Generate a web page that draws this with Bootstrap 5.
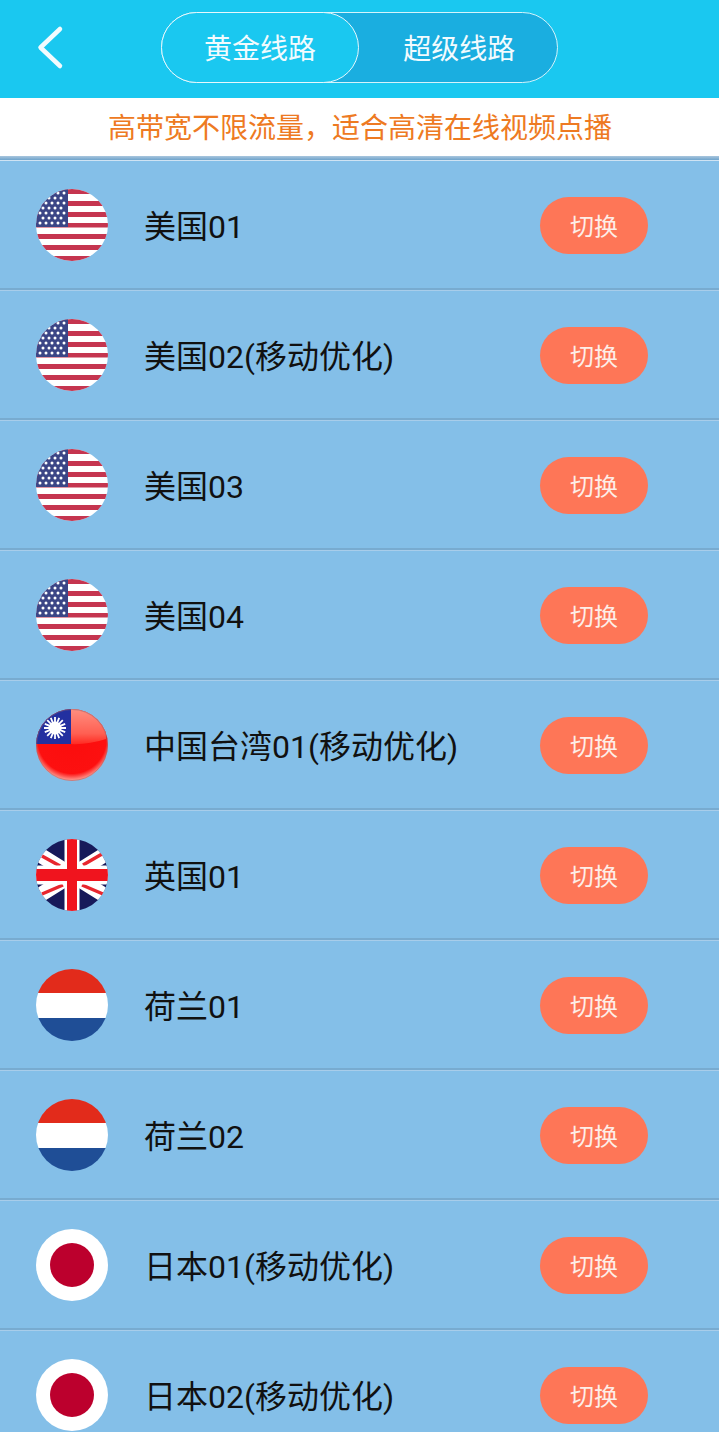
<!DOCTYPE html>
<html lang="zh">
<head>
    <meta charset="UTF-8">
    <title>线路</title>
    <link href="https://cdn.jsdelivr.net/npm/bootstrap@5.3.3/dist/css/bootstrap.min.css" rel="stylesheet">
    <script src="https://cdn.jsdelivr.net/npm/bootstrap@5.3.3/dist/js/bootstrap.bundle.min.js"></script>
    <style>
        body { width: 719px; height: 1432px; overflow: hidden; background: #84bfe8; font-family: Roboto, "Noto Sans CJK SC", sans-serif; }
        .top-bar { height: 98px; background: #1ac8f0; padding-left: 36px; padding-bottom: 3px; }
        .back-btn { width: 30px; height: 46px; margin-bottom: 1px; }
        .line-switch { width: 397px; height: 71px; margin-left: 95px; background: #1aaee0; border: 1px solid #d5f3fb; border-radius: 36px; }
        .line-tab { height: 100%; width: 50%; font-size: 28px; color: #f2fbfe; line-height: 1; padding: 5px 0 0 3px; }
        .line-tab.on { background: #1ac8f0; border: 1px solid #e6f8fd; border-radius: 36px; margin: -1px 0 -1px -1px; height: 71px; width: 198px; padding-left: 0; }
        .note-bar { height: 58px; background: #fff; color: #ee7a22; font-size: 28px; line-height: 1; padding: 4px 0 0 1px; }
        .bar-edge { height: 5px; background: linear-gradient(#a9c6de, #6fa4cc); border-bottom: 1px solid #cfe3f3; }
        .line-row { height: 130px; background: #84bfe8; border-bottom: 1px solid #a8cdea; box-shadow: inset 0 -2px 0 #78abd0; padding: 0 71px 1px 36px; }
        .flag-pic { width: 72px; height: 72px; flex: none; display: block; filter: blur(.4px); }
        .line-name { font-size: 32px; color: #111; margin-left: 36px; line-height: 1; flex-grow: 1; padding-top: 4px; }
        .switch-btn { width: 108px; height: 57px; background: #fe7657; color: #fdeee8; border-radius: 29px; font-size: 24px; border: 0; padding: 3px 0 0; line-height: 1; }
        .switch-btn:hover { background: #fe7657; color: #fdeee8; }
    </style>
</head>
<body>
    <svg width="0" height="0" class="position-absolute">
        <defs>
            <clipPath id="roundClip"><circle cx="36" cy="36" r="36"/></clipPath>
            <radialGradient id="twRed" cx="50%" cy="42%" r="56%">
                <stop offset="0" stop-color="#fb0d0d"/><stop offset="0.85" stop-color="#fd1010"/><stop offset="1" stop-color="#ff8d84"/>
            </radialGradient>
            <linearGradient id="twGloss" x1="0" y1="0" x2="0" y2="1">
                <stop offset="0" stop-color="#ff8f80"/><stop offset=".7" stop-color="#ff5f52"/><stop offset="1" stop-color="#ff2a22"/>
            </linearGradient>
            <symbol id="flagUs" viewBox="0 0 72 72">
                <g clip-path="url(#roundClip)">
                    <rect width="72" height="72" fill="#fff"/>
                    <path fill="#c5354f" d="M0 0h72v5H0zM0 12h72v5H0zM0 23h72v5H0zM0 34h72v4.500H0zM0 45h72v5H0zM0 56h72v5H0zM0 67h72v5H0z"/>
                    <rect width="32" height="38" fill="#3b4586"/>
                    <g fill="#fff">
                        <circle cx="28" cy="4" r="1.500"/><circle cx="22" cy="4" r="1.500"/><circle cx="16" cy="4" r="1.500"/>
                        <circle cx="25" cy="9" r="1.500"/><circle cx="19" cy="9" r="1.500"/><circle cx="13" cy="9" r="1.500"/>
                        <circle cx="28" cy="14" r="1.500"/><circle cx="22" cy="14" r="1.500"/><circle cx="16" cy="14" r="1.500"/><circle cx="10" cy="14" r="1.500"/>
                        <circle cx="25" cy="19" r="1.500"/><circle cx="19" cy="19" r="1.500"/><circle cx="13" cy="19" r="1.500"/><circle cx="7" cy="19" r="1.500"/>
                        <circle cx="28" cy="24" r="1.500"/><circle cx="22" cy="24" r="1.500"/><circle cx="16" cy="24" r="1.500"/><circle cx="10" cy="24" r="1.500"/><circle cx="4" cy="24" r="1.500"/>
                        <circle cx="25" cy="29" r="1.500"/><circle cx="19" cy="29" r="1.500"/><circle cx="13" cy="29" r="1.500"/><circle cx="7" cy="29" r="1.500"/>
                        <circle cx="28" cy="34" r="1.500"/><circle cx="22" cy="34" r="1.500"/><circle cx="16" cy="34" r="1.500"/><circle cx="10" cy="34" r="1.500"/><circle cx="4" cy="34" r="1.500"/>
                    </g>
                </g>
            </symbol>
            <symbol id="flagTw" viewBox="0 0 72 72">
                <g clip-path="url(#roundClip)">
                    <rect width="72" height="72" fill="url(#twRed)"/>
                    <path fill="url(#twGloss)" d="M34 0h30v6q7 10 6 24-18 6-36 5z"/>
                    <rect width="35" height="35" fill="#2330a0"/>
                    <g stroke="#fff" stroke-width="1.800" transform="translate(19 19)">
                        <path d="M0-11V11M-11 0H11M-7.800-7.800L7.800 7.800M-7.800 7.800L7.800-7.800M-4.200-10.200L4.200 10.200M4.200-10.200L-4.200 10.200M-10.200-4.200L10.200 4.200M-10.200 4.200L10.200-4.200"/>
                    </g>
                    <circle cx="19" cy="19" r="6.500" fill="#fff"/>
                </g>
                <circle cx="36" cy="36" r="35.500" fill="none" stroke="#8a6a70" stroke-opacity=".45"/>
            </symbol>
            <symbol id="flagUk" viewBox="0 0 72 72">
                <g clip-path="url(#roundClip)">
                    <rect width="72" height="72" fill="#17195a"/>
                    <path stroke="#fff" stroke-width="15" d="M-4 11L76 61M76 11L-4 61"/>
                    <path stroke="#e8262e" stroke-width="3.500" d="M6 17L24 27M66 15L47 26M6 55L27 46M67 55L46 46"/>
                    <path fill="#fff" d="M28.500 0h15v26.500H72v19H43.500V72h-15V45.500H0v-19h28.500z"/>
                    <path fill="#f0141e" d="M31 0h10v30h31v12H41v30H31V42H0V30h31z"/>
                </g>
            </symbol>
            <symbol id="flagNl" viewBox="0 0 72 72">
                <g clip-path="url(#roundClip)">
                    <rect width="72" height="24" fill="#e22b1b"/>
                    <rect y="24" width="72" height="25" fill="#fff"/>
                    <rect y="49" width="72" height="23" fill="#1f4e96"/>
                </g>
            </symbol>
            <symbol id="flagJp" viewBox="0 0 72 72">
                <circle cx="36" cy="36" r="36" fill="#fff"/>
                <circle cx="36" cy="36" r="22" fill="#bc002d"/>
            </symbol>
        </defs>
    </svg>

    <div class="top-bar d-flex align-items-center">
        <svg class="back-btn" viewBox="0 0 30 46"><path d="M24 5L4.500 23.500 24 42" fill="none" stroke="#f2fbfe" stroke-width="4.500" stroke-linecap="round" stroke-linejoin="round"/></svg>
        <div class="line-switch d-flex">
            <div class="line-tab on d-flex align-items-center justify-content-center">黄金线路</div>
            <div class="line-tab d-flex align-items-center justify-content-center">超级线路</div>
        </div>
    </div>
    <div class="note-bar d-flex align-items-center justify-content-center">高带宽不限流量，适合高清在线视频点播</div>
    <div class="bar-edge"></div>

    <div id="lineList">
        <div class="line-row d-flex align-items-center"><svg class="flag-pic"><use href="#flagUs"/></svg><span class="line-name">美国01</span><button type="button" class="btn switch-btn">切换</button></div>
        <div class="line-row d-flex align-items-center"><svg class="flag-pic"><use href="#flagUs"/></svg><span class="line-name">美国02(移动优化)</span><button type="button" class="btn switch-btn">切换</button></div>
        <div class="line-row d-flex align-items-center"><svg class="flag-pic"><use href="#flagUs"/></svg><span class="line-name">美国03</span><button type="button" class="btn switch-btn">切换</button></div>
        <div class="line-row d-flex align-items-center"><svg class="flag-pic"><use href="#flagUs"/></svg><span class="line-name">美国04</span><button type="button" class="btn switch-btn">切换</button></div>
        <div class="line-row d-flex align-items-center"><svg class="flag-pic"><use href="#flagTw"/></svg><span class="line-name">中国台湾01(移动优化)</span><button type="button" class="btn switch-btn">切换</button></div>
        <div class="line-row d-flex align-items-center"><svg class="flag-pic"><use href="#flagUk"/></svg><span class="line-name">英国01</span><button type="button" class="btn switch-btn">切换</button></div>
        <div class="line-row d-flex align-items-center"><svg class="flag-pic"><use href="#flagNl"/></svg><span class="line-name">荷兰01</span><button type="button" class="btn switch-btn">切换</button></div>
        <div class="line-row d-flex align-items-center"><svg class="flag-pic"><use href="#flagNl"/></svg><span class="line-name">荷兰02</span><button type="button" class="btn switch-btn">切换</button></div>
        <div class="line-row d-flex align-items-center"><svg class="flag-pic"><use href="#flagJp"/></svg><span class="line-name">日本01(移动优化)</span><button type="button" class="btn switch-btn">切换</button></div>
        <div class="line-row d-flex align-items-center"><svg class="flag-pic"><use href="#flagJp"/></svg><span class="line-name">日本02(移动优化)</span><button type="button" class="btn switch-btn">切换</button></div>
    </div>
</body>
</html>
